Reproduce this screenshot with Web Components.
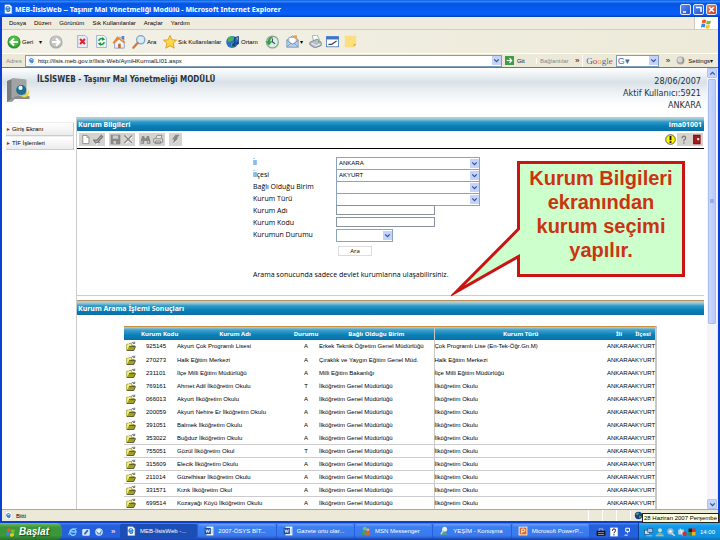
<!DOCTYPE html>
<html lang="tr">
<head>
<meta charset="utf-8">
<title>MEB-İlsisWeb -- Taşınır Mal Yönetmeliği Modülü</title>
<style>
html,body{margin:0;height:100%}
body{font-family:"Liberation Sans",Arial,sans-serif;font-size:6px;color:#000;background:#fff;overflow:hidden}
</style>
</head>
<body>
<desktop-screen></desktop-screen>
<script>
const make=(name,css,html,setup)=>customElements.define(name,class extends HTMLElement{
  connectedCallback(){
    if(this.shadowRoot)return;
    const root=this.attachShadow({mode:'open'});
    const t=document.createElement('template');
    t.innerHTML='<style>*{box-sizing:border-box}button,input,select{font:inherit;color:inherit;margin:0;padding:0;border:0;background:none;border-radius:0;min-width:0}a{color:inherit;text-decoration:none}'+css+'</style>'+(typeof html==='function'?html(this):html);
    root.append(t.content.cloneNode(true));
    if(setup)setup(root,this);
  }
});

const ie='<path d="M3 1h8l3 3v11H3z" fill="#fff" stroke="#bcd" stroke-width=".6"/><path d="M11.4 9.6H5.2a3.3 3.3 0 1 1 6-2H5.4M11 10.5a3.3 3.3 0 0 1-5 .6" fill="none" stroke="#246fc4" stroke-width="1.7"/>';
const word='<rect x="4" y="1" width="11" height="14" fill="#fff"/><rect x="1" y="3" width="10" height="10" fill="#1d4d9e"/><path d="M3 5.5l1.5 5L6 6l1.5 4.5L9 5.5M12 5h2M12 8h2M12 11h2" stroke="#fff" fill="none" stroke-width="1.2"/><path d="M12 5h2M12 8h2M12 11h2" stroke="#467"/>';
const icons={
 ie,word,
 back:'<circle cx="8" cy="8" r="7.5" fill="#2c9a2c"/><circle cx="8" cy="7" r="6" fill="#4dbb45"/><path d="M12.5 8H4.5M8 4L4 8l4 4" fill="none" stroke="#fff" stroke-width="2.2"/>',
 fwd:'<circle cx="8" cy="8" r="7.5" fill="#aaa"/><circle cx="8" cy="7.4" r="6.2" fill="#c6c6c2"/><path d="M3.5 8h8M8 4l4 4-4 4" fill="none" stroke="#fff" stroke-width="2.2"/>',
 stop:'<path d="M2 .5h9l3 3v12H2z" fill="#e4edfb" stroke="#8aa6cf"/><path d="M5 5l6 6M11 5l-6 6" stroke="#d8262a" stroke-width="2.6"/>',
 refresh:'<path d="M2 .5h9l3 3v12H2z" fill="#eef6f4" stroke="#8aa6cf"/><path d="M4.5 7a4 4 0 0 1 6-2M11.5 9a4 4 0 0 1-6 2" fill="none" stroke="#1d9a3a" stroke-width="2"/><path d="M9 2.5l3.5 3-4 1.500zM7 13.500l-3.500-3 4-1.500z" fill="#1d9a3a"/>',
 home:'<path d="M3 8v7h11V7l-5-5z" fill="#f0f3fa" stroke="#8a9dc0"/><path d="M.5 9L6 1.500l9.500 7-2 .8L8 5 2.500 10z" fill="#e08a3c"/><path d="M11 1h3v5l-3-2z" fill="#5d7fc0"/><path d="M7 10h3v5H7z" fill="#c46b2a"/>',
 search:'<circle cx="10" cy="5.500" r="4.700" fill="#d7ecfb" stroke="#7ca3cd" stroke-width="1.500"/><path d="M6.500 9L1.500 14.500" stroke="#c87f4e" stroke-width="2.600" stroke-linecap="round"/>',
 star:'<path d="M8 .5l2.200 5 5.300.4-4 3.600 1.300 5.500L8 12.200 3.200 15l1.300-5.500-4-3.600 5.300-.4z" fill="#ffd84a" stroke="#d89a18"/>',
 media:'<circle cx="7" cy="8" r="6.800" fill="#2a6fc2"/><path d="M2 4q3-4 7-2 1 4-3 5l-4 1zM6 9l5 1-2 4-3-1z" fill="#49b35c"/><path d="M10 11V3l4-1v7" fill="none" stroke="#1b3d88" stroke-width="1.400"/><circle cx="8.800" cy="11.500" r="2" fill="#1b3d88"/><circle cx="13" cy="9.500" r="1.600" fill="#1b3d88"/>',
 history:'<circle cx="8.500" cy="8" r="6.800" fill="#dceee0" stroke="#8aa894" stroke-width="1.400"/><path d="M8.500 4v4l3 2" fill="none" stroke="#356" stroke-width="1.300"/><path d="M.5 7l4 5 4-5H6Q6 4 10 2 4 1 3 7z" fill="#3c9c4b"/>',
 mail:'<path d="M1 6l7-5 7 5v9H1z" fill="#b8d0ef" stroke="#7391bd"/><path d="M3.500 3h9v6L8 11 3.500 9z" fill="#fff" stroke="#9ab"/><path d="M1 15l5-5M15 15l-5-5M1 6.500l7 5 7-5" stroke="#7391bd" fill="none"/><path d="M9 1l4-1 1 4-3 1z" fill="#f0a243"/>',
 print:'<path d="M4 1l6-1 3 6-7 2z" fill="#fff" stroke="#8a9"/><path d="M1 9l9-4 5 4v4l-8 3-6-4z" fill="#b9bdc9" stroke="#747b8c"/><path d="M3 10l6 3 5-2" stroke="#fff" fill="none"/><circle cx="12" cy="8.500" r="1" fill="#5b5"/>',
 edit:'<rect x=".5" y="2" width="15" height="12.500" fill="#fff" stroke="#4776bb"/><path d="M.5 2h15v3.500H.5z" fill="#3b74cf"/><path d="M3 11.500h4l6-4" fill="none" stroke="#445" stroke-width="1.500"/>',
 note:'<path d="M1 1h14v10l-3 4H1z" fill="#fbdf7e"/><path d="M12 15v-4h3z" fill="#dcae3a"/>',
 flag:'<path d="M2 3q3-2 5.500 0L6.500 8Q4 6 1 8z" fill="#ef5a28"/><path d="M8.500 3.500q3 2 6 0l-1 5q-3 2-6 0z" fill="#7fba28"/><path d="M.7 9q3-2 5.500 0L5.200 14Q3 12 0 14z" fill="#3a86e8"/><path d="M7.200 9.500q3 2 6 0l-1 5q-3 2-6 0z" fill="#fcc61f"/>',
 go:'<rect width="16" height="16" fill="#3c9e45"/><path d="M3 8h9M8 4l4 4-4 4" fill="none" stroke="#fff" stroke-width="2"/>',
 ball:'<circle cx="8" cy="8" r="7" fill="#aaa"/><circle cx="7" cy="6.500" r="4.500" fill="#d8d8d8"/><path d="M12 3q3 5 0 10" fill="none" stroke="#777"/>',
 chev:'<path d="M4 6l4 4 4-4" fill="none" stroke="#36548f" stroke-width="2.200"/>',
 up:'<path d="M4 10l4-4 4 4" fill="none" stroke="#36548f" stroke-width="2.200"/>',
 logo:'<path d="M0 2L4 0l9 1v10l2 3H5l-2 2H0z" fill="#a2a4a3"/><path d="M0 2l3-1v13l-3 2z" fill="#777c80"/><path d="M3 14l3-2h9v2H5l-2 2z" fill="#8c8c8c"/><circle cx="9.500" cy="8" r="3.400" fill="#1f6f93"/><circle cx="9" cy="6.600" r="1.400" fill="#e8f7ff"/><path d="M8 11.500q6 1 6.500-4.500 1.500 5-3 6z" fill="#e5dc4a"/>',
 neu:'<path d="M4 2h6l3 3v9H4z" fill="#fff" stroke="#888" stroke-width="1.300"/><path d="M10 2v3h3" fill="none" stroke="#888"/>',
 pen:'<path d="M2 9l3 4 8-10" stroke="#fff" stroke-width="4" fill="none"/><path d="M1 9l3 4 3-1 7-8-2-2-6 7zM6 12h4" fill="#bbb" stroke="#777" stroke-width="1.700"/>',
 save:'<path d="M1 1h14v14H1z" fill="#888"/><path d="M4 2h8v5H4zM5 10h6v4H5z" fill="#ccc"/><path d="M9 10h2v4H9z" fill="#777"/>',
 del:'<path d="M3 3l10 10M13 3L3 13" stroke="#fff" stroke-width="4"/><path d="M2 2l11 11M13 2L2 13" stroke="#888" stroke-width="2.200"/>',
 find:'<path d="M3 3h3l1 3h2l1-3h3l2 7v4h-5v-4H6v4H1v-4z" fill="#888"/><path d="M3 10v3M12 10v3" stroke="#fff"/>',
 prt2:'<path d="M4 6l2-4h7l-1 4M1 7h13v5H1zM4 10h7v4H3z" fill="#e8e8e8" stroke="#888" stroke-width="1.400"/>',
 bolt:'<path d="M8 1h6l-4 5h3L4 15l2-7H3z" fill="#888"/><path d="M4 15l9-9" stroke="#fff"/>',
 warn:'<circle cx="8" cy="8" r="7" fill="#fff200" stroke="#222"/><path d="M8 3v6M8 10.500v2.500" stroke="#111" stroke-width="2.600"/>',
 help:'<path d="M6 6q0-3 2.500-3T11 6q0 1.500-2.500 3v1.500M8.500 12v2" fill="none" stroke="#777" stroke-width="1.800"/>',
 door:'<path d="M3 1h11v14H3z" fill="#8e1111"/><path d="M5 3h7v10H5z" fill="#a51d1d"/><path d="M9 6h3v3H9z" fill="#eee"/>',
 folder:'<path d="M1 5h3l1-1h4v3h4v8H1z" fill="#f5ef8a" stroke="#8a8a14" stroke-width="1"/><path d="M5 8.500h10.500L12 14H2z" fill="#a0a01c"/><path d="M1.500 15H12l3.500-6M5 8.500h10" fill="none" stroke="#222" stroke-width="1.100"/><path d="M9 3q3-2 4.500 0M14 1v3h-3" fill="none" stroke="#333" stroke-width="1"/>',
 globe:'<circle cx="8" cy="8" r="6.500" fill="#173f8f"/><path d="M5 3q4-1 4 2L6 8 3 6zM9 8l4 1-2 4-2-1z" fill="#49a35d"/>',
 ieblue:'<path d="M12.500 10.500A5 5 0 1 1 13 8H5" fill="none" stroke="#7cd0ff" stroke-width="2.200"/><path d="M1 13Q2 5 14 2" fill="none" stroke="#c9ecff"/>',
 desk:'<rect x="2" y="3" width="12" height="11" rx="2" fill="#d5e7fb"/><path d="M5 10l5-6 2 2-5 6H5z" fill="#315fae"/>',
 bird:'<circle cx="8" cy="8" r="6" fill="#d5e7fb"/><path d="M3 6l5 3 5-5-2 8H6z" fill="#5b8fdc"/><circle cx="8" cy="7" r="2" fill="#fff"/>',
 msn:'<circle cx="6" cy="4" r="3" fill="#76c46c"/><path d="M1 14q0-7 5-7t5 7z" fill="#4c9e55"/><circle cx="11" cy="6" r="2.500" fill="#f5a95a"/><path d="M7 15q0-6 4-6t4 6z" fill="#cc6846"/>',
 chat:'<circle cx="9" cy="5" r="4" fill="#e8f1e8"/><path d="M2 14q2-6 8-5l4 5z" fill="#54a987"/><path d="M3 13l4-6" stroke="#ddd" stroke-width="2"/>',
 ppt:'<rect x="1" y="1" width="14" height="14" fill="#fff0dc"/><rect x="2.500" y="2.500" width="11" height="11" fill="#d9692c"/><path d="M6 12V5h3q2 0 2 2T9 9H6" fill="none" stroke="#fff" stroke-width="1.500"/>',
 kbd:'<path d="M1 6h14v8H1z" fill="#111"/><path d="M5 6V3h6v3M3 9h10M3 12h10" fill="none" stroke="#ddd"/>',
 q:'<rect x="2" y="1" width="12" height="14" fill="#fff"/><path d="M5.500 6q0-3 2.500-3t2.500 2.500Q10.500 7.500 8 9v1M8 11.500v2" fill="none" stroke="#112" stroke-width="1.600"/>',
 tool:'<path d="M6 2h6v5H6zM9 7v3M4 13h5" stroke="#fff" stroke-width="1.600" fill="none"/>',
 net:'<rect x="1" y="5" width="8" height="7" fill="#bfe0ff" stroke="#246"/><rect x="6" y="2" width="8" height="7" fill="#8fc6f7" stroke="#246"/><path d="M4 14h9" stroke="#ddd"/>',
 user:'<circle cx="8" cy="5" r="3" fill="#cfe1d3"/><path d="M1 13l6-5 7 3-3 3z" fill="#7fae93"/><path d="M1 14h13" stroke="#dde"/>',
 vol:'<circle cx="7" cy="7" r="5" fill="#9fb9cc"/><circle cx="7" cy="7" r="2" fill="#fff"/><path d="M9 10l5 4" stroke="#dfe8f0" stroke-width="2"/>',
 off:'<path d="M2 4h9v8H2z" fill="#bcd3e6"/><path d="M5 2l4 12" stroke="#fff"/><circle cx="12" cy="11" r="3.500" fill="#d92b2b"/>',
 quad:'<path d="M1 1h7v7H1z" fill="#222"/><path d="M8 1h7v7H8z" fill="#d4342a"/><path d="M1 8h7v7H1z" fill="#3d8a37"/><path d="M8 8h7v7H8z" fill="#e3b526"/>'
};
make('ui-icon',':host{display:inline-block;flex:none;width:var(--s,12px);height:var(--s,12px)}svg{display:block;width:100%;height:100%}',
 el=>`<svg viewBox="0 0 16 16" aria-hidden="true">${icons[el.getAttribute('name')]}</svg>`);

make('title-bar',`:host{display:flex;align-items:center;height:17px;gap:2px;padding:1px 3px 0 3px;background:linear-gradient(#0a5be0,#2f86f8 8%,#0553e0 22%,#0560f8 70%,#0a5df2 85%,#0241b4);color:#fff;font:bold 7px "Noto Sans",sans-serif}
 span{flex:1;white-space:nowrap}.b{display:flex;gap:2px}button{width:11px;height:11px;border:1px solid #dfe8fb;border-radius:2px;background:linear-gradient(135deg,#5b8df3,#2350d2)}
 svg{display:block;width:9px;height:9px}button.x{background:linear-gradient(135deg,#ec8468,#cc3a18)}ui-icon{--s:10px}`,
 `<ui-icon name="ie"></ui-icon><span>MEB-İlsisWeb -- Taşınır Mal Yönetmeliği Modülü - Microsoft Internet Explorer</span>
 <div class="b"><button aria-label="Simge durumuna küçült"><svg viewBox="0 0 9 9"><path d="M2 7h3" stroke="#fff" stroke-width="1.500"/></svg></button><button aria-label="Önceki boyut"><svg viewBox="0 0 9 9"><path d="M2 2.500h5V7" fill="none" stroke="#fff" stroke-width="1.500"/></svg></button><button class="x" aria-label="Kapat"><svg viewBox="0 0 9 9"><path d="M2 2l5 5M7 2L2 7" stroke="#fff" stroke-width="1.500"/></svg></button></div>`);

make('menu-bar',`:host{display:flex;height:13px;background:#efecdf;border-bottom:1px solid #dcc9b8;align-items:stretch;padding-left:7px}
 nav{display:flex;flex:1;gap:8px;align-items:center}div{width:24px;background:#fff;border-left:1px solid #cfcabb;display:grid;place-items:center;--s:11px}button{white-space:nowrap}`,
 `<nav><button>Dosya</button><button>Düzen</button><button>Görünüm</button><button>Sık Kullanılanlar</button><button>Araçlar</button><button>Yardım</button></nav><div><ui-icon name="flag"></ui-icon></div>`);

make('tool-bar',`:host{display:grid;grid-template-columns:42px 27px 19px 17px 20px 31px 63px 39px 21px 23px 17px 18px 18px;height:23px;align-items:center;padding-left:5px;background:linear-gradient(90deg,#f3f1e8,#edead9);white-space:nowrap;--s:14px}
 button{display:flex;align-items:center;gap:1px;text-align:left}.s{--s:13px}i{font-style:normal;padding-left:5px}`,
 `<button><ui-icon name="back"></ui-icon>Geri<i>▾</i></button><button aria-label="İleri"><ui-icon name="fwd"></ui-icon></button>
 <button class="s" aria-label="Durdur"><ui-icon name="stop"></ui-icon></button><button class="s" aria-label="Yenile"><ui-icon name="refresh"></ui-icon></button><button aria-label="Giriş"><ui-icon name="home"></ui-icon></button>
 <button><ui-icon name="search"></ui-icon>Ara</button><button><ui-icon name="star"></ui-icon>Sık Kullanılanlar</button><button><ui-icon name="media"></ui-icon>Ortam</button><button aria-label="Geçmiş"><ui-icon name="history"></ui-icon></button>
 <button aria-label="Posta" class="s"><ui-icon name="mail"></ui-icon>▾</button><button aria-label="Yazdır" class="s"><ui-icon name="print"></ui-icon></button><button aria-label="Düzenle" class="s"><ui-icon name="edit"></ui-icon></button><button aria-label="Not" class="s"><ui-icon name="note"></ui-icon></button>`);

make('drop-box',`:host{display:grid;height:11px;--s:9px}select,input,ui-icon{grid-area:1/1}select{appearance:none;border:1px solid #8ba4bd;background:#fff;padding:0 2px;width:100%;height:100%}
 ui-icon{place-self:center end;background:#c3d3fb;margin-right:1px;pointer-events:none}`,
 el=>`<select aria-label="${el.getAttribute('label')}"><option>${el.getAttribute('value')||''}</option></select><ui-icon name="chev"></ui-icon>`);

make('address-bar',`:host{display:flex;height:15px;align-items:center;background:#ece9d8;border-top:1px solid #fff;border-bottom:1px solid #77756c;padding:0 5px 0 4px;gap:3px;white-space:nowrap;color:#111;--s:9px}
 label{color:#888;width:16px}.a{display:flex;flex:1;height:12px;background:#fff;border:1px solid #7f9db9;align-items:center;gap:2px;padding-left:1px}.a input{flex:1;height:10px}.a button{background:#c3d3fb;height:9px;display:flex}
 button.g{display:flex;align-items:center;gap:3px;width:28px}.l{color:#888;border-left:1px solid #fff;padding-left:3px;width:36px}.r{display:flex;gap:3px;align-items:center;border-left:1px solid #fff;padding-left:3px}
 b{font:9px "Liberation Serif",serif}sup{font-size:8px;line-height:6px}.r sup{margin:0 3px 0 4px}.q{display:flex;width:43px;height:12px;background:#fff;border:1px solid #7f9db9;align-items:center;padding-left:1px}.q input{width:100%;font-size:9px;color:#4467b0}.q ui-icon{background:#c3d3fb}`,
 `<label for="u">Adres</label><div class="a"><ui-icon name="ie"></ui-icon><input id="u" value="http://ilsis.meb.gov.tr/Ilsis-Web/AyniHKurmaILI01.aspx"><button aria-label="Adresleri göster"><ui-icon name="chev"></ui-icon></button></div>
 <button class="g"><ui-icon name="go"></ui-icon>Git</button><span class="l">Bağlantılar</span><sup>»</sup>
 <div class="r"><b><span style="color:#36c">G</span><span style="color:#d33">o</span><span style="color:#da2">o</span><span style="color:#36c">g</span><span style="color:#3a4">l</span><span style="color:#d33">e</span></b><div class="q"><input aria-label="Google" value="G▾"><ui-icon name="chev"></ui-icon></div><sup>»</sup><ui-icon name="ball"></ui-icon><button>Settings▾</button></div>`);

make('page-header',`:host{display:flex;height:49px;background:linear-gradient(#fff 0,#d9e2e8 14px,#edf1f4 24px,#fff 38px);padding:4px 6px 0 5px;color:#24323c}
 ui-icon{--s:24px;margin-top:6px}h1{margin:2px 0 0 6px;font:bold 8px/11px "DejaVu Sans Condensed","DejaVu Sans",sans-serif;flex:1}p{margin:3px 0 0;text-align:right;font:9px/12px "DejaVu Sans Condensed","DejaVu Sans",sans-serif;white-space:nowrap}`,
 `<ui-icon name="logo"></ui-icon><h1>İLSİSWEB - Taşınır Mal Yönetmeliği MODÜLÜ</h1><p>28/06/2007<br>Aktif Kullanıcı:5921<br>ANKARA</p>`);

make('side-nav',`:host{display:block;width:68px;padding-top:5px}a{display:flex;align-items:center;gap:1px;height:14px;border:1px solid #ccc;border-top-color:#eee;background:linear-gradient(#fff,#ececec);white-space:nowrap;border-left:0}i{color:#c22;font-style:normal;font-size:5px}`,
 `<nav><a href="#"><i>►</i>Giriş Ekranı</a><a href="#"><i>►</i>TİF İşlemleri</a></nav>`);

make('section-bar',`:host{display:flex;justify-content:space-between;align-items:center;height:14px;padding:1px 2px 0 1px;background:linear-gradient(#c3cfcd 0,#9cc7d4 2px,#2a9bc9 5px,#0a7fb8 9px,#0a6fa6);color:#fff;font:bold 7px/12px "Noto Sans",sans-serif;white-space:nowrap}`,'<slot></slot>');

make('icon-bar',`:host{display:flex;justify-content:space-between;height:18px;border-bottom:1px solid #000;padding:2px 1px 2px 2px;--s:11px}div{display:flex}button{display:grid;place-items:center;width:13px;height:13px;background:#d6d3ce}div.l button:nth-child(2n){margin-right:4px}.w{background:none}`,
 `<div class="l">${[['neu','Yeni'],['pen','Düzelt'],['save','Kaydet'],['del','Sil'],['find','Bul'],['prt2','Yazdır'],['bolt','Çalıştır']].map(([n,l])=>`<button aria-label="${l}"><ui-icon name="${n}"></ui-icon></button>`).join('')}</div>
 <div><button class="w" aria-label="Uyarı"><ui-icon name="warn"></ui-icon></button><button aria-label="Yardım"><ui-icon name="help"></ui-icon></button><button aria-label="Çıkış"><ui-icon name="door"></ui-icon></button></div>`);

make('search-form',`:host{display:block;padding:7px 0 15px 176px}form{display:grid;grid-template-columns:83px 144px;grid-auto-rows:12px;align-items:center;font-family:"Open Sans","Noto Sans",sans-serif;font-size:7px;line-height:11px}
 input{width:99px;height:10px;border:1px solid #8a93a0}drop-box{font-family:"Liberation Sans",sans-serif;font-size:6px}drop-box.n{width:57px}button{width:34px;height:10px;border:1px solid #ddd;line-height:8px;margin:10px 0 0 2px;background:#fff;font-size:6px}
 span{white-space:nowrap}p{margin:17px 0 0;line-height:11px;font-family:"Open Sans","Noto Sans",sans-serif;font-size:7px}`,
 `<form><span>İl</span><drop-box label="İl" value="ANKARA"></drop-box><span>İlçesi</span><drop-box label="İlçesi" value="AKYURT"></drop-box><span>Bağlı Olduğu Birim</span><drop-box label="Bağlı Olduğu Birim"></drop-box><span>Kurum Türü</span><drop-box label="Kurum Türü"></drop-box>
 <label for="a">Kurum Adı</label><input id="a"><label for="k">Kurum Kodu</label><input id="k"><span>Kurumun Durumu</span><drop-box class="n" label="Kurumun Durumu"></drop-box><span></span><button type="button">Ara</button></form>
 <p>Arama sonucunda sadece devlet kurumlarına ulaşabilirsiniz.</p>`);

const gm='İlköğretim Genel Müdürlüğü',io='İlköğretim Okulu';
const rows=[
['925145','Akyurt Çok Programlı Lisesi','A','Erkek Teknik Öğretim Genel Müdürlüğü','Çok Programlı Lise (En-Tek-Öğr.Gn.M)'],
['270273','Halk Eğitim Merkezi','A','Çıraklık ve Yaygın Eğitim Genel Müd.','Halk Eğitim Merkezi'],
['231101','İlçe Milli Eğitim Müdürlüğü','A','Milli Eğitim Bakanlığı','İlçe Milli Eğitim Müdürlüğü'],
['769161','Ahmet Adil İlköğretim Okulu','T',gm,io],['066013','Akyurt İlköğretim Okulu','A',gm,io],['200059','Akyurt Nehire Er İlköğretim Okulu','A',gm,io],
['391051','Balmek İlköğretim Okulu','A',gm,io],['353022','Buğduz İlköğretim Okulu','A',gm,io],['755051','Gözül İlköğretim Okul','T',gm,io],
['315609','Elecik İlköğretim Okulu','A',gm,io],['211014','Güzelhisar İlköğretim Okulu','A',gm,io],['331571','Kızık İlköğretim Okul','A',gm,io],['699514','Kozayağı Köyü İlköğretim Okulu','A',gm,io]];
make('result-table',`:host{display:block;margin:11px 47px 0;border-top:1px solid #c98f45;border-right:2px solid #c8c8c8}
 table{border-collapse:collapse;table-layout:fixed;width:100%;line-height:8px}th,td{padding:0;white-space:nowrap;height:13px;text-align:left}tr{height:13px}
 thead tr{background:linear-gradient(#b9d0d4 0,#3ba2ca 3px,#0a7fb8 8px,#0a6fa6)}th{color:#fff;font:bold 6px "Noto Sans",sans-serif;text-align:center}
 tbody tr{border-bottom:1px solid #ccc}tbody tr:nth-child(-n+7){border-bottom-color:#fff}td:nth-child(4){text-align:center}td:nth-child(5),th:nth-child(5){border-right:1px solid #c8c8c8}td:nth-child(1){padding-left:2px}td:nth-child(2){padding-left:5px}ui-icon{--s:10px;display:block}`,
 `<table><colgroup><col style="width:17px"><col style="width:36px"><col style="width:116px"><col style="width:26px"><col style="width:115px"><col><col style="width:24px"><col style="width:24px"></colgroup>
 <thead><tr><th></th><th>Kurum Kodu</th><th>Kurum Adı</th><th>Durumu</th><th>Bağlı Olduğu Birim</th><th>Kurum Türü</th><th>İli</th><th>İlçesi</th></tr></thead>
 <tbody>${rows.map(r=>`<tr><td><ui-icon name="folder"></ui-icon></td>${r.map(c=>`<td>${c}</td>`).join('')}<td>ANKARA</td><td>AKYURT</td></tr>`).join('')}</tbody></table>`);

make('scroll-bar',`:host{display:flex;flex-direction:column;width:11px;background:#f5f4fa;border-right:1px solid #e8e8f0;--s:9px}button{display:grid;place-items:center;height:10px;width:10px;background:#c3d3fb;border:1px solid #b0c4ee;border-radius:1px}div{flex:244;margin:1px;background:linear-gradient(90deg,#cbd8fb,#b8cafa);border:1px solid #a9bdf0;border-radius:1px;display:grid;place-items:center}i{width:4px;height:4px;background:#93aef0}span{flex:175}`,
 `<button aria-label="Yukarı"><ui-icon name="up"></ui-icon></button><div><i></i></div><span></span><button aria-label="Aşağı"><ui-icon name="chev"></ui-icon></button>`);

make('web-page',`:host{display:flex;min-height:0;flex:1;background:#fff;overflow:hidden}main{flex:1;min-width:0}.c{display:flex;padding-right:3px;padding-left:4px}side-nav{flex:none}section{flex:1;min-width:0;margin-left:2px;border-left:1px solid #ccc}.t{border-top:1px solid #ccc;height:6px;border-bottom:1px solid #b9905c}`,
 `<main><page-header></page-header><div class="c"><side-nav></side-nav><section><section-bar><span>Kurum Bilgileri</span><span>ima01001</span></section-bar><icon-bar></icon-bar><search-form></search-form><div class="t"></div><section-bar>Kurum Arama İşlemi Sonuçları</section-bar><result-table></result-table></section></div></main><scroll-bar></scroll-bar>`);

make('status-bar',`:host{display:flex;flex:none;height:12px;background:#ece9d8;border-top:1px solid #aca899;align-items:center;padding-left:2px;gap:3px;--s:9px}span{flex:1}i{width:11px;height:11px;border-left:1px solid #fff}div{width:88px;display:flex;align-items:center;gap:3px;border-left:1px solid #fff;padding-left:3px}`,
 `<ui-icon name="ie"></ui-icon><span>Bitti</span><i></i><i></i><i></i><div><ui-icon name="globe"></ui-icon>İnt</div>`);

make('task-bar',`:host{display:flex;flex:none;height:17px;align-items:stretch;background:linear-gradient(#3f8cf3,#245edb 15%,#2560dd 80%,#1941a5);color:#fff;white-space:nowrap;--s:10px}
 button{display:flex;align-items:center}.st{width:62px;gap:3px;padding-left:6px;background:linear-gradient(#6fbf66,#3c953c 25%,#3a983a 75%,#2a6f2a);border-radius:0 6px 6px 0;font:italic bold 10px "Liberation Sans",sans-serif;text-shadow:1px 1px 1px #1a4a1a}
 .q{display:flex;align-items:center;gap:3px;padding-left:6px;width:58px}sup{font-size:8px;line-height:8px;margin-left:4px}.t{flex:1;display:flex;min-width:0}.t button{flex:1;margin:1px 1px 2px 0;padding-left:6px;gap:4px;background:linear-gradient(#6ba2fa,#3c80f0 20%,#397af0 80%,#2c61cc);border-radius:2px;min-width:0;overflow:hidden}
 .t .on{background:#1c4fb5;--s:10px}.l{display:flex;align-items:center;gap:3px;padding:0 6px}.n{display:flex;align-items:center;width:82px;gap:1px;padding-left:5px;background:linear-gradient(#3fb4f5,#129aea 20%,#1290e0 80%,#0f6fb4);border-left:1px solid #0a3f9b}time{margin-left:3px;font-size:6px}`,
 `<button class="st"><ui-icon name="flag"></ui-icon>Başlat</button><div class="q"><ui-icon name="ieblue"></ui-icon><ui-icon name="desk"></ui-icon><ui-icon name="bird"></ui-icon><sup>»</sup></div>
 <div class="t"><button class="on"><ui-icon name="ie"></ui-icon>MEB-İlsisWeb -...</button><button><ui-icon name="word"></ui-icon>2007-ÖSYS BİT...</button><button><ui-icon name="word"></ui-icon>Gazete ortu olar...</button><button><ui-icon name="msn"></ui-icon>MSN Messenger</button><button><ui-icon name="chat"></ui-icon>YEŞİM - Konuşma</button><button><ui-icon name="ppt"></ui-icon>Microsoft PowerP...</button></div>
 <div class="l"><ui-icon name="kbd"></ui-icon><ui-icon name="q"></ui-icon><ui-icon name="tool"></ui-icon></div><div class="n"><ui-icon name="net"></ui-icon><ui-icon name="user"></ui-icon><ui-icon name="vol"></ui-icon><ui-icon name="off"></ui-icon><ui-icon name="quad" style="--s:8px"></ui-icon><time>14:00</time></div>`);

make('call-out',`:host{position:absolute;right:35px;top:161px;width:234px;height:136px;display:block}svg{position:absolute;inset:0;width:100%;height:100%}p{position:absolute;left:66px;right:0;top:5px;margin:0;text-align:center;color:#cc3311;font:bold 20px/24px "Liberation Sans",Arial,sans-serif}`,
 `<svg viewBox="0 0 234 136"><path d="M67.500 1.500H232.500V114.500H67.500V95.500L5 131 67.500 68z" fill="#ccffcc" stroke="#cc1313" stroke-width="3" stroke-miterlimit="10"/></svg><p><slot></slot></p>`);

make('date-tip',`:host{position:absolute;right:1px;bottom:17px;height:10px;background:#ffffe1;border:1px solid #222;padding:0 1px;font-size:6px;line-height:8px;white-space:nowrap}`,'<slot></slot>');

make('desktop-screen',`:host{display:flex;flex-direction:column;height:100vh;position:relative;background:#0a3fc8}.w{display:flex;flex-direction:column;flex:1;min-height:0;border:solid #0a3fd0;border-width:0 2px 2px 2px}.w>*{flex-shrink:0}.w>web-page{flex-shrink:1}`,
 `<title-bar></title-bar><div class="w"><menu-bar></menu-bar><tool-bar></tool-bar><address-bar></address-bar><web-page></web-page><status-bar></status-bar></div><task-bar></task-bar>
 <call-out>Kurum Bilgileri<br>ekranından<br>kurum seçimi<br>yapılır.</call-out><date-tip>28 Haziran 2007 Perşembe</date-tip>`);
</script>
</body>
</html>
